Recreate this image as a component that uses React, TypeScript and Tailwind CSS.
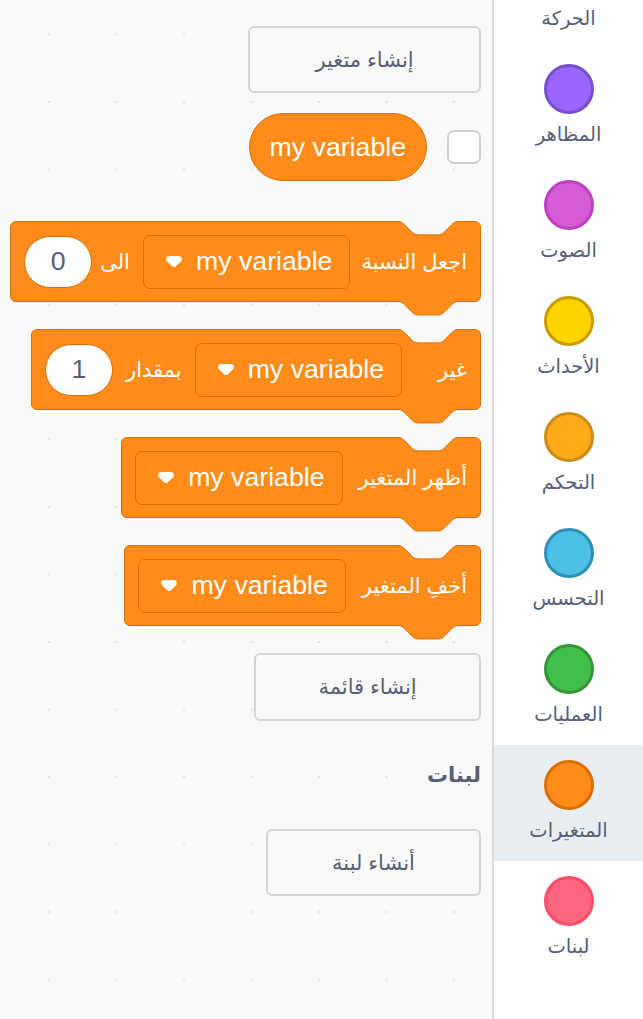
import React from 'react';

const FONT = { fontFamily: '"Liberation Sans", "DejaVu Sans", sans-serif' };

// scratch-style notch path, scaled 1.675x
const NOTCH =
  'M0,0.5 C3.35,0.5 5.03,2.18 6.7,3.85 L13.4,10.55 C15.08,12.23 16.75,13.9 20.1,13.9 H40.2 C43.55,13.9 45.23,12.23 46.9,10.55 L53.6,3.85 C55.28,2.18 56.95,0.5 60.3,0.5';

const categories = [
  { label: 'الحركة', fill: '#4c97ff', stroke: '#3373cc' },
  { label: 'المظاهر', fill: '#9966ff', stroke: '#774dcb' },
  { label: 'الصوت', fill: '#d65cd6', stroke: '#bd42bd' },
  { label: 'الأحداث', fill: '#ffd500', stroke: '#cc9900' },
  { label: 'التحكم', fill: '#ffab19', stroke: '#cf8b17' },
  { label: 'التحسس', fill: '#4cbfe6', stroke: '#2e8eb8' },
  { label: 'العمليات', fill: '#40bf4a', stroke: '#389438' },
  { label: 'المتغيرات', fill: '#ff8c1a', stroke: '#db6e00', active: true },
  { label: 'لبنات', fill: '#ff6680', stroke: '#ff4d6a' },
];

const Arrow = () => (
  <svg width="16" height="11" viewBox="0 0 12.71 8.79" className="shrink-0">
    <path
      fill="#fff"
      d="M12.71,2.44A2.41,2.41,0,0,1,12,4.16L8.08,8.08a2.45,2.45,0,0,1-3.45,0L0.72,4.16A2.42,2.42,0,0,1,0,2.44,2.48,2.48,0,0,1,0.71,0.71C1,0.47,1.43,0,6.36,0S11.75,0.46,12,0.71A2.44,2.44,0,0,1,12.71,2.44Z"
    />
  </svg>
);

const Dropdown = () => (
  <div className="flex shrink-0 items-center gap-[14px] h-[54px] pr-[17px] pl-[22px] rounded-[7px] border border-[#db6e00] bg-[#ff8c1a]">
    <span className="text-[26.7px] text-white leading-none whitespace-nowrap" dir="ltr">my variable</span>
    <Arrow />
  </div>
);

const NumberInput = ({ value }: { value: string }) => (
  <div className="flex shrink-0 items-center justify-center w-[68px] h-[52px] rounded-full bg-white border border-[#db6e00]">
    <span className="text-[26.7px] text-[#575e75] leading-none">{value}</span>
  </div>
);

const Label = ({ children, className = '' }: { children: React.ReactNode; className?: string }) => (
  <span className={`text-[21px] text-white leading-none whitespace-nowrap ${className}`}>{children}</span>
);

const StackBlock = ({ children }: { children: React.ReactNode }) => (
  <div className="relative flex items-center gap-[13px] h-[81px] px-[13px] rounded-[6px] border border-[#db6e00] bg-[#ff8c1a]">
    <svg width="61" height="15" className="absolute -top-px right-[21px]">
      <path d={NOTCH + ' L60.3,0 L0,0 Z'} fill="#f9f9f9" />
      <path d={NOTCH} fill="none" stroke="#db6e00" strokeWidth="1" />
    </svg>
    <svg width="61" height="15" className="absolute -bottom-[15px] right-[21px]">
      <path d={NOTCH + ' L60.3,0 L0,0 Z'} fill="#ff8c1a" />
      <path d={NOTCH} fill="none" stroke="#db6e00" strokeWidth="1" />
    </svg>
    {children}
  </div>
);

const PaletteButton = ({ label, width }: { label: string; width: string }) => (
  <div
    className={`flex items-center justify-center rounded-[6px] border-2 border-[#d4d4d4] bg-[#f9f9f9] text-[21px] text-[#575e75] ${width}`}
  >
    {label}
  </div>
);

export default function App() {
  return (
    <div className="flex w-[643px] h-[1019px] overflow-hidden bg-white" style={FONT}>
      {/* block palette */}
      <div
        dir="rtl"
        className="flex flex-col items-start w-[494px] shrink-0 h-full pr-[11px] border-r-2 border-[#d9d9d9] bg-[#f9f9f9] bg-[radial-gradient(circle,#e4e4e4_1.3px,transparent_1.6px)] [background-size:67.5px_67.5px] [background-position:15.25px_0.75px]"
      >
        <PaletteButton label="إنشاء متغير" width="mt-[26px] h-[67px] w-[233px]" />

        <div className="flex items-center gap-[20px] mt-[20px] h-[68px]">
          <div className="w-[34px] h-[34px] rounded-[7px] border-2 border-[#cfcfcf] bg-white" />
          <div className="flex items-center h-[68px] px-[20px] rounded-full border border-[#db6e00] bg-[#ff8c1a]">
            <span className="text-[26.7px] text-white leading-none whitespace-nowrap" dir="ltr">my variable</span>
          </div>
        </div>

        <div className="mt-[40px]">
          <StackBlock>
            <Label className="ml-[-2px]">اجعل النسبة</Label>
            <Dropdown />
            <Label className="ml-[-5px]">الى</Label>
            <NumberInput value="0" />
          </StackBlock>
        </div>

        <div className="mt-[27px]">
          <StackBlock>
            <Label className="ml-[23px]">غير</Label>
            <Dropdown />
            <Label>بمقدار</Label>
            <NumberInput value="1" />
          </StackBlock>
        </div>

        <div className="mt-[27px]">
          <StackBlock>
            <Label className="ml-[3px]">أظهر المتغير</Label>
            <Dropdown />
          </StackBlock>
        </div>

        <div className="mt-[27px]">
          <StackBlock>
            <Label className="ml-[3px]">أخفِ المتغير</Label>
            <Dropdown />
          </StackBlock>
        </div>

        <PaletteButton label="إنشاء قائمة" width="mt-[27px] h-[68px] w-[227px]" />

        <div className="mt-[40px] h-[28px] flex items-center text-[21px] font-bold text-[#575e75]">لبنات</div>

        <PaletteButton label="أنشاء لبنة" width="mt-[40px] h-[67px] w-[215px]" />
      </div>

      {/* category menu */}
      <div className="flex-1 h-full overflow-hidden bg-white">
        <div className="-mt-[67px] flex flex-col">
          {categories.map((c) => (
            <div
              key={c.label}
              className={`flex flex-col items-center h-[116px] pt-[15px] ${c.active ? 'bg-[#e9eef2]' : ''}`}
            >
              <div
                className="w-[50px] h-[50px] rounded-full border-[3px]"
                style={{ backgroundColor: c.fill, borderColor: c.stroke }}
              />
              <div className="mt-[8px] text-[19.5px] leading-[24px] text-[#575e75]">{c.label}</div>
            </div>
          ))}
        </div>
      </div>
    </div>
  );
}
